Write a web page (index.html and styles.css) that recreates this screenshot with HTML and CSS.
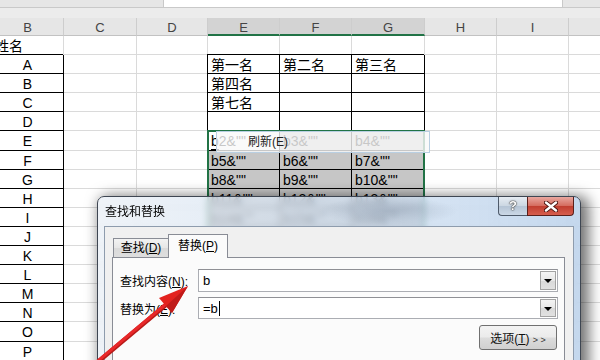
FILE: index.html
```html
<!DOCTYPE html>
<html lang="zh-CN">
<head>
    <meta charset="UTF-8" />
    <title>查找和替换</title>
    <link rel="stylesheet" href="styles.css">
</head>
<body>
    <div class="top">
        <div class="namebox"></div>
        <div class="fbar"></div>
    </div>
    <div class="band"></div>

    <div class="sheet">
        <div class="hd">B</div><div class="hd">C</div><div class="hd">D</div><div class="hd on">E</div><div class="hd on">F</div><div class="hd on">G</div><div class="hd">H</div><div class="hd">I</div><div class="hd"></div>

        <div class="c">姓名</div><div class="c"></div><div class="c"></div><div class="c"></div><div class="c"></div><div class="c"></div><div class="c"></div><div class="c"></div><div class="c"></div>
        <div class="c k m">A</div><div class="c"></div><div class="c"></div><div class="c k">第一名</div><div class="c k">第二名</div><div class="c k">第三名</div><div class="c"></div><div class="c"></div><div class="c"></div>
        <div class="c k m">B</div><div class="c"></div><div class="c"></div><div class="c k">第四名</div><div class="c k"></div><div class="c k"></div><div class="c"></div><div class="c"></div><div class="c"></div>
        <div class="c k m">C</div><div class="c"></div><div class="c"></div><div class="c k">第七名</div><div class="c k"></div><div class="c k"></div><div class="c"></div><div class="c"></div><div class="c"></div>
        <div class="c k m">D</div><div class="c"></div><div class="c"></div><div class="c k"></div><div class="c k"></div><div class="c k"></div><div class="c"></div><div class="c"></div><div class="c"></div>
        <div class="c k m">E</div><div class="c"></div><div class="c"></div><div class="c k"><span class="ul">b</span>2&amp;""</div><div class="c k s">b3&amp;""</div><div class="c k s">b4&amp;""</div><div class="c"></div><div class="c"></div><div class="c"></div>
        <div class="c k m">F</div><div class="c"></div><div class="c"></div><div class="c k s">b5&amp;""</div><div class="c k s">b6&amp;""</div><div class="c k s">b7&amp;""</div><div class="c"></div><div class="c"></div><div class="c"></div>
        <div class="c k m">G</div><div class="c"></div><div class="c"></div><div class="c k s">b8&amp;""</div><div class="c k s">b9&amp;""</div><div class="c k s">b10&amp;""</div><div class="c"></div><div class="c"></div><div class="c"></div>
        <div class="c k m">H</div><div class="c"></div><div class="c"></div><div class="c k s">b11&amp;""</div><div class="c k s">b12&amp;""</div><div class="c k s">b13&amp;""</div><div class="c"></div><div class="c"></div><div class="c"></div>
        <div class="c k m">I</div><div class="c"></div><div class="c"></div><div class="c k s">b14&amp;""</div><div class="c k s">b15&amp;""</div><div class="c k s">b16&amp;""</div><div class="c"></div><div class="c"></div><div class="c"></div>
        <div class="c k m">J</div><div class="c"></div><div class="c"></div><div class="c k s">b17&amp;""</div><div class="c k s">b18&amp;""</div><div class="c k s">b19&amp;""</div><div class="c"></div><div class="c"></div><div class="c"></div>
        <div class="c k m">K</div><div class="c"></div><div class="c"></div><div class="c"></div><div class="c"></div><div class="c"></div><div class="c"></div><div class="c"></div><div class="c"></div>
        <div class="c k m">L</div><div class="c"></div><div class="c"></div><div class="c"></div><div class="c"></div><div class="c"></div><div class="c"></div><div class="c"></div><div class="c"></div>
        <div class="c k m">M</div><div class="c"></div><div class="c"></div><div class="c"></div><div class="c"></div><div class="c"></div><div class="c"></div><div class="c"></div><div class="c"></div>
        <div class="c k m">N</div><div class="c"></div><div class="c"></div><div class="c"></div><div class="c"></div><div class="c"></div><div class="c"></div><div class="c"></div><div class="c"></div>
        <div class="c k m">O</div><div class="c"></div><div class="c"></div><div class="c"></div><div class="c"></div><div class="c"></div><div class="c"></div><div class="c"></div><div class="c"></div>
        <div class="c k m">P</div><div class="c"></div><div class="c"></div><div class="c"></div><div class="c"></div><div class="c"></div><div class="c"></div><div class="c"></div><div class="c"></div>
    </div>

    <!-- selection and paste tooltip sit over the cells -->
    <div class="selbox"></div>
    <div class="tip">刷新(E)</div>

    <div class="dlg">
        <div class="dlg-title">
            <span>查找和替换</span>
            <div class="caps">
                <div class="help">?</div>
                <div class="close">
                    <svg width="14" height="11" viewBox="0 0 14 11">
                        <path d="M2 1.5 L12 9.5 M12 1.5 L2 9.5" stroke="#4a1410" stroke-width="4.2" stroke-linecap="round"/>
                        <path d="M2 1.5 L12 9.5 M12 1.5 L2 9.5" stroke="#fff" stroke-width="2.4" stroke-linecap="round"/>
                    </svg>
                </div>
            </div>
        </div>
        <div class="dlg-body">
            <div class="tabs">
                <div class="tab">查找(<u>D</u>)</div>
                <div class="tab on">替换(<u>P</u>)</div>
            </div>
            <div class="panel">
                <div class="row">
                    <label>查找内容(<u>N</u>):</label>
                    <div class="combo"><span>b</span><i class="dd"></i></div>
                </div>
                <div class="row r2">
                    <label>替换为(<u>E</u>):</label>
                    <div class="combo"><span>=b<b class="caret"></b></span><i class="dd"></i></div>
                </div>
                <div class="actions">
                    <button class="opt">选项(<u>T</u>) <small>&gt; &gt;</small></button>
                </div>
            </div>
        </div>
    </div>

    <svg class="arrow" width="600" height="360" viewBox="0 0 600 360">
        <line x1="93" y1="366" x2="167" y2="304" stroke="#b81a18" stroke-width="4.5"/>
        <line x1="93" y1="365" x2="167" y2="303" stroke="#e8282a" stroke-width="3"/>
        <polygon points="188,286 172,313 159,298" fill="#e3231f"/>
        <polygon points="188,286 172,313 166,306" fill="#c01b19"/>
    </svg>
</body>
</html>
```

FILE: styles.css
```css
body {
    margin: 0;
    width: 600px;
    height: 360px;
    overflow: hidden;
    position: relative;
    background: #fff;
    font-family: "Liberation Sans", "Noto Sans CJK SC", sans-serif;
}

.top {
    display: flex;
    height: 7px;
    background: #e6e6e6;
    border-bottom: 1px solid #c9c9c9;
}

.namebox {
    width: 163px;
}

.fbar {
    width: 398px;
    background: #fff;
    border-left: 1px solid #c9c9c9;
    border-right: 1px solid #c9c9c9;
}

.band {
    height: 10px;
    background: #ececec;
}

.sheet {
    display: grid;
    grid-template-columns: 72px 73px 71px 72px 72px 73px 72px 72px 72px;
    grid-template-rows: 18px repeat(17, 19.1px);
    margin-left: -8px;
}

.hd {
    box-sizing: border-box;
    background: #e6e6e6;
    border-right: 1px solid #cdcdcd;
    border-bottom: 1px solid #c2c2c2;
    text-align: center;
    font-size: 13px;
    line-height: 20px;
    color: #444;
}

.hd.on {
    background: #d3d3d3;
    border-bottom: 2px solid #217346;
    line-height: 19px;
}

.c {
    box-sizing: border-box;
    border-right: 1px solid #dadada;
    border-bottom: 1px solid #dadada;
    padding: 0 3px;
    font-size: 14px;
    line-height: 21px;
    color: #000;
    white-space: nowrap;
    overflow: hidden;
}

.k {
    border-right-color: #000;
    border-bottom-color: #000;
    box-shadow: -1px -1px 0 #000;
}

.m {
    text-align: center;
}

.s {
    background: #c6c6c6;
}

.ul {
    border-bottom: 1px solid #000;
}

.selbox {
    position: absolute;
    left: 207px;
    top: 130px;
    width: 218px;
    height: 240px;
    box-sizing: border-box;
    border: 2px solid #217346;
}

.tip {
    position: absolute;
    left: 216px;
    top: 131px;
    width: 214px;
    height: 22px;
    box-sizing: border-box;
    border: 1px solid #b9cfe2;
    background: rgba(249, 249, 249, 0.8);
    padding-left: 31px;
    font-size: 12px;
    line-height: 20px;
    color: #222;
}

/* find & replace dialog */
.dlg {
    position: absolute;
    left: 97px;
    top: 196px;
    width: 484px;
    height: 190px;
    box-sizing: border-box;
    display: flex;
    flex-direction: column;
    padding: 0 6px;
    border: 1px solid #3e4652;
    border-radius: 7px 7px 0 0;
    background:
        radial-gradient(ellipse 70px 14px at 290px 14px, rgba(120, 135, 155, 0.35), transparent),
        linear-gradient(90deg, rgba(232, 238, 245, 0.72), rgba(204, 221, 240, 0.72) 60%, rgba(182, 206, 233, 0.8));
    backdrop-filter: blur(3px);
    box-shadow: 5px 3px 14px 3px rgba(0, 0, 0, 0.55);
    font-family: "Liberation Sans", "Noto Sans CJK SC", sans-serif;
    font-size: 12px;
}

.dlg-title {
    height: 29px;
    flex: none;
    display: flex;
    justify-content: space-between;
}

.dlg-title span {
    align-self: center;
    padding-left: 1px;
    margin-top: -2px;
    color: #000;
}

.caps {
    display: flex;
    align-self: flex-start;
}

.help {
    width: 29px;
    height: 19px;
    box-sizing: border-box;
    border: 1px solid #4e5a6a;
    border-top: none;
    border-right: none;
    border-radius: 0 0 0 4px;
    background: linear-gradient(#e6ecf2, #cbd6e2 50%, #b5c4d5 51%, #cbd8e6);
    text-align: center;
    font-weight: bold;
    font-size: 13px;
    line-height: 18px;
    color: #fff;
    text-shadow: 0 0 1px #333, 0 0 1px #333, 0 0 2px #555;
}

.close {
    width: 47px;
    height: 19px;
    box-sizing: border-box;
    border: 1px solid #5a1f1a;
    border-top: none;
    border-radius: 0 0 4px 0;
    background: linear-gradient(#e9a79f, #d56d60 48%, #c13e30 52%, #d65e4e);
    display: flex;
    align-items: center;
    justify-content: center;
}

.dlg-body {
    flex: 1;
    display: flex;
    flex-direction: column;
    background: #f0f0f0;
    border: 1px solid #8e9cad;
    border-bottom: none;
    padding: 7px 8px 0 7px;
}

.tabs {
    display: flex;
    align-items: flex-end;
    height: 23px;
    padding-left: 1px;
}

.tab {
    width: 55px;
    height: 19px;
    box-sizing: border-box;
    border: 1px solid #898c95;
    border-bottom: none;
    border-right: none;
    background: linear-gradient(#f3f3f3, #e6e6e6 50%, #dadada 51%, #dedede);
    text-align: center;
    line-height: 18px;
}

.tab.on {
    width: 60px;
    height: 24px;
    margin-bottom: -1px;
    position: relative;
    border-right: 1px solid #898c95;
    background: #fbfbfb;
    line-height: 22px;
}

.panel {
    flex: 1;
    border: 1px solid #898c95;
    border-bottom: none;
    background: #fbfbfb;
    padding: 11px 6px 0 7px;
}

.row {
    display: flex;
    align-items: center;
    margin-bottom: 5px;
}

.row label {
    width: 78px;
    color: #000;
}

.combo {
    flex: 1;
    height: 23px;
    box-sizing: border-box;
    display: flex;
    align-items: center;
    padding: 1px;
    border: 1px solid #abadb3;
    border-top-color: #8f9095;
    background: #fff;
}

.r2 .combo {
    height: 22px;
}

.combo span {
    flex: 1;
    padding-left: 3px;
    font-size: 13px;
    display: flex;
    align-items: center;
}

.caret {
    display: inline-block;
    width: 1px;
    height: 15px;
    margin-left: 1px;
    background: #000;
}

.dd {
    width: 16px;
    height: 19px;
    box-sizing: border-box;
    border: 1px solid #a3a3a3;
    background: linear-gradient(#f4f4f4, #e8e8e8 50%, #d9d9d9 51%, #e1e1e1);
    position: relative;
}

.r2 .dd {
    height: 18px;
}

.dd::after {
    content: "";
    position: absolute;
    left: 3px;
    top: 7px;
    border-left: 4px solid transparent;
    border-right: 4px solid transparent;
    border-top: 4px solid #000;
}

.actions {
    display: flex;
    justify-content: flex-end;
    margin-top: 6px;
    padding-right: 1px;
}

.opt {
    width: 78px;
    height: 25px;
    padding: 0;
    border: 1px solid #707070;
    border-radius: 3px;
    background: linear-gradient(#f3f3f3, #ebebeb 48%, #dcdcdc 52%, #d0d0d0);
    font-family: "Liberation Sans", "Noto Sans CJK SC", sans-serif;
    font-size: 12px;
    color: #111;
}

.opt small {
    font-size: 9px;
    color: #333;
}

.arrow {
    position: absolute;
    left: 0;
    top: 0;
    pointer-events: none;
}
```
